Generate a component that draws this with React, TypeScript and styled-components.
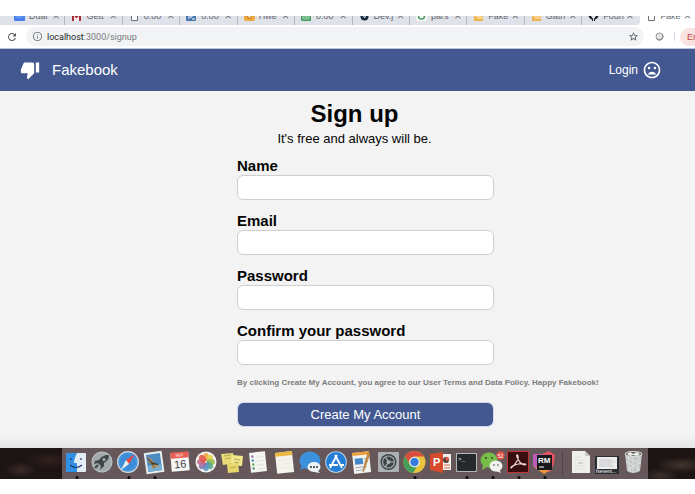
import React from "react";
import styled, { createGlobalStyle } from "styled-components";
import { MdThumbDown, MdMoodBad, MdRefresh, MdInfoOutline, MdStarBorder } from "react-icons/md";

const GlobalStyle = createGlobalStyle`
  * { box-sizing: border-box; }
  body { margin: 0; background: #fff; font-family: "Liberation Sans", Arial, sans-serif; overflow-x: hidden; }
  button, input { font-family: inherit; margin: 0; }
`;

const Screen = styled.div`
  padding: 16px 0 15px;
`;

/* Browser chrome */
const TabStrip = styled.nav`
  display: grid;
  grid-template-columns: repeat(12, minmax(0, 1fr));
  grid-template-rows: 9px;
  align-items: end;
  height: 9px;
  padding-left: 8px;
  margin-right: -2px;
  background: #dfe2e8;
  overflow: hidden;
`;

const TabSlot = styled.div<{ $beforeActive?: boolean }>`
  background: ${(p) => (p.$beforeActive ? "#fff" : "transparent")};
`;

const Tab = styled.button<{ $active?: boolean; $beforeActive?: boolean }>`
  width: 100%;
  height: 19px;
  display: flex;
  align-items: center;
  gap: 4px;
  padding: 0 4px 0 6px;
  border: 0;
  border-right: 1px solid ${(p) => (p.$active || p.$beforeActive ? "transparent" : "#b2b6bd")};
  border-radius: ${(p) => (p.$beforeActive ? "0 0 4px 0" : "0")};
  background: ${(p) => (p.$active ? "#fff" : "#dfe2e8")};
  color: #62666c;
  font-size: 9px;
  line-height: 12px;
`;

const TabTitle = styled.span`
  flex: 1;
  min-width: 0;
  white-space: nowrap;
  text-align: left;
`;

const TabClose = styled.span`
  font-size: 12px;
  padding-right: 1px;
`;

const AddressBar = styled.div`
  display: flex;
  align-items: center;
  height: 24px;
  padding-left: 6px;
  background: #fff;
  border-bottom: 1px solid #b9c3da;
  overflow: hidden;
  color: #5f6368;
`;

const ToolButton = styled.button`
  display: flex;
  padding: 0;
  border: 0;
  background: none;
  color: #54585d;
`;

const Address = styled.div`
  flex: 1;
  display: flex;
  align-items: center;
  gap: 4px;
  height: 19px;
  margin-left: 8px;
  padding: 0 5px 0 6px;
  border-radius: 10px;
  background: #f2f3f4;
  color: #777b80;
`;

const Url = styled.span`
  flex: 1;
  font: 9px/16px Roboto, sans-serif;
`;

const Host = styled.span`
  color: #25282b;
`;

const Extension = styled(ToolButton)`
  margin: 0 10px 0 11px;
`;

const ProfileArea = styled.div`
  padding-left: 5px;
  border-left: 1px solid #d2dae8;
  height: 9px;
  display: flex;
  align-items: center;
`;

const ErrorButton = styled.button`
  width: 15px;
  height: 18px;
  padding: 0 0 0 7px;
  border: 0;
  border-radius: 9px 0 0 9px;
  background: #f9e3e2;
  color: #c4473f;
  font-size: 9px;
  white-space: nowrap;
  overflow: hidden;
`;

/* Site */
const SiteHeader = styled.header`
  display: flex;
  align-items: center;
  justify-content: space-between;
  height: 42px;
  padding: 0 33px 0 20px;
  background: #435891;
  color: #fff;
`;

const Brand = styled.a`
  display: flex;
  align-items: center;
  gap: 12px;
  color: inherit;
  text-decoration: none;
  font-size: 15px;
  line-height: 18px;
`;

const LoginLink = styled(Brand)`
  gap: 4px;
  font-size: 12px;
`;

const Main = styled.main`
  padding: 8px 0 21px 237px;
  background: linear-gradient(to top, #e6e6e6, #f3f3f3 14px);
  color: #050505;
`;

const Intro = styled.div`
  width: 235px;
  text-align: center;
`;

const Title = styled.h1`
  margin: 0;
  font-size: 24px;
  line-height: 30px;
`;

const Subtitle = styled.p`
  margin: 0 0 8px;
  font-size: 13px;
  line-height: 20px;
  white-space: nowrap;
`;

const Form = styled.form`
  display: flex;
  flex-direction: column;
  align-items: flex-start;
`;

const Field = styled.div`
  display: flex;
  flex-direction: column;
  width: 257px;
  margin-bottom: 12px;
`;

const Label = styled.label`
  font-size: 15px;
  font-weight: bold;
  line-height: 18px;
`;

const TextInput = styled.input`
  height: 25px;
  padding: 0 8px;
  border: 1px solid #cecece;
  border-radius: 6px;
  background: #fff;
  font-size: 13px;
`;

const Terms = styled.p`
  margin: 0 0 14px;
  color: #7c7c7c;
  font-size: 8px;
  font-weight: bold;
  line-height: 11px;
  white-space: nowrap;
`;

const Submit = styled.button`
  width: 257px;
  height: 25px;
  padding: 0;
  border: 1px solid #d3d8e6;
  border-radius: 6px;
  background: #435891;
  background-clip: padding-box;
  color: #fff;
  font-size: 13px;
`;

/* Desktop */
const Desktop = styled.footer`
  display: flex;
  justify-content: center;
  height: 31px;
  padding-left: 15px;
  background:
    radial-gradient(ellipse 16px 8px at 3% 70%, #3b2b29, transparent),
    radial-gradient(ellipse 22px 9px at 7% 40%, #33201f, transparent),
    radial-gradient(ellipse 25px 8px at 98% 55%, #44362f, transparent),
    radial-gradient(ellipse 18px 8px at 95% 90%, #3c302c, transparent),
    #1c1514;
`;

const Dock = styled.div`
  display: flex;
  padding: 0 2px 0 1px;
  background: #66585a;
`;

const DockButton = styled.button`
  display: block;
  width: 26px;
  height: 31px;
  padding: 0;
  border: 0;
  background: none;
  svg { display: block; }
`;

const DockDivider = styled.div`
  width: 1px;
  height: 25px;
  margin: 3px 5px;
  background: #51474a;
`;

const tabs = [
  { title: "Dual", icon: "docs" }, { title: "Gett", icon: "mail" },
  { title: "0.00", icon: "page" }, { title: "0.00", icon: "blue" },
  { title: "Hwe", icon: "orange" }, { title: "0.00", icon: "sheet" },
  { title: "Dev.j", icon: "dark" }, { title: "pars", icon: "ring" },
  { title: "Fake", icon: "yellow" }, { title: "Gath", icon: "yellow" },
  { title: "Foun", icon: "github" }, { title: "Fake", icon: "page" },
];

const favicons: Record<string, React.ReactNode> = {
  docs: <><rect width="11" height="10" rx="1" fill="#477ee8" /><path d="M2 6h7" stroke="#7fa9f5" /></>,
  mail: <><rect x="1" width="9" height="10" fill="#f7eeee" /><path d="M2 10V2l3.500 4L9 2v8" fill="none" stroke="#a52c32" strokeWidth="2" /></>,
  page: <path d="M2.500 1h6v8.500h-6z" fill="#fff" stroke="#6d7177" />,
  blue: <><rect width="10" height="10" rx="1" fill="#4575ad" /><path d="M3 8V3h3v3H4M6 8h3" fill="none" stroke="#fff" /></>,
  orange: <><rect width="11" height="10" rx="2" fill="#eca83e" /><circle cx="5.500" cy="5.500" r="2" fill="#f7d084" stroke="#b77720" /></>,
  sheet: <><rect width="10" height="10" rx="1" fill="#4b9c63" /><path d="M2 6h6M5 3v5M2 3h6v5H2z" fill="none" stroke="#9bd1aa" /></>,
  dark: <><circle cx="5.500" cy="5.500" r="4" fill="#162c43" /><path d="m4 4 1.500 3L7 4" fill="none" stroke="#e4ebee" /></>,
  ring: <><rect width="11" height="10" rx="2" fill="#f4f7f4" /><circle cx="5.500" cy="5" r="3" fill="none" stroke="#4e9966" strokeWidth="1.500" /></>,
  yellow: <><path d="M1 1h9v9H1z" fill="#edb24a" /><path d="M4 7h6M2 5h7" stroke="#fff1c9" /></>,
  github: <path d="M4 10V8.500C-1 7 0 1 3 .500L5.500 1 8 .500c3 .500 4 6.500-1 8V10H6V7.500C8 7 8 4 7 3.500H4C3 4 3 7 5 7.500V10z" fill="#17191b" />,
};

const Favicon = ({ name }: { name: string }) => (
  <svg width="11" height="10" viewBox="0 0 11 10" aria-hidden="true">{favicons[name]}</svg>
);

type App = { name: string; art: React.ReactNode; running?: boolean };

const petals = ["#f2a23c", "#e4d34a", "#96bf50", "#55a987", "#5797c2", "#8979b2", "#c5688d", "#e55b4f"];

const apps: App[] = [
  { name: "Finder", running: true, art: <>
    <rect x="3" y="5" width="20" height="19" rx="1" fill="#e4edf6" />
    <path d="M4 5h10c-2 4-3 7-3 10h3v9H4a1 1 0 0 1-1-1V6a1 1 0 0 1 1-1z" fill="#318fe6" />
    <path d="M7 17q6 5 12 0M8 10v2M18 10v2" fill="none" stroke="#183b62" strokeWidth="1.200" /></> },
  { name: "Launchpad", art: <>
    <circle cx="13" cy="14" r="10.500" fill="#bfc4c5" /><circle cx="13" cy="14" r="9.500" fill="#a1a9ab" />
    <path d="M20 7c-5 0-8 2-10 5l-4 1-1 3 4-1 3 3-1 4 4-4v-3c3-2 5-4 5-8z" fill="#3e4447" />
    <circle cx="15" cy="11.500" r="1.500" fill="#aab2b4" /><path d="m6 20 3-3" stroke="#3e4447" strokeWidth="2" /></> },
  { name: "Safari", running: true, art: <>
    <circle cx="13" cy="14" r="11" fill="#d5dde2" /><circle cx="13" cy="14" r="9.800" fill="#3b8ddb" />
    <circle cx="13" cy="14" r="8.500" fill="none" stroke="#8dc3e8" strokeDasharray="1 1.500" strokeWidth=".6" />
    <path d="m20 6-9 6 3 4z" fill="#ec4940" /><path d="m6 22 5-10 3 4z" fill="#eef0ee" /></> },
  { name: "Mail", running: true, art: <g transform="rotate(-8 13 14)">
    <path d="M4 4h18v21H4z" fill="#e9eff1" /><path d="M6 6h14v17H6z" fill="#4c8ac2" />
    <path d="M6 17h14v6H6z" fill="#78aed2" /><path d="M6 8c4 1 5 3 6 5l6 7-4-1-3 2-1-5-3-3 2-1z" fill="#b8945a" />
    <path d="m7 9 4 5 6 3-6-1zM9 14l4 6" fill="#453e33" stroke="#453e33" strokeWidth=".6" /></g> },
  { name: "Calendar", art: <g transform="rotate(-5 13 14)">
    <path d="M4 5h18v18H4z" fill="#f6f6f4" /><path d="M4 4h18v6H4z" fill="#e95c52" />
    <text x="13" y="8.500" textAnchor="middle" fontSize="4" fill="#fff">SEP</text>
    <text x="13" y="20" textAnchor="middle" fontSize="11" fill="#424242">16</text></g> },
  { name: "Photos", art: <>
    <circle cx="13" cy="14" r="10.500" fill="#f3f3ef" />
    {petals.map((c, i) => <ellipse key={c} cx="13" cy="9.500" rx="3" ry="4.500" fill={c} opacity="0.900" transform={`rotate(${i * 45} 13 14)`} />)}
    <circle cx="13" cy="14" r="1" fill="#eee6cf" /></> },
  { name: "Stickies", art: <>
    <path d="m2 6 12-1 2 10-12 2z" fill="#eadd75" /><path d="m13 7 11 1-1 10-11-1z" fill="#f1e78b" />
    <path d="m8 16 11-1 1 9-11 1z" fill="#e7d86c" /><path d="m5 8 7-1M6 11l6-1M15 11l6 1M15 14l5 1M11 20l6-1" stroke="#9b914e" strokeWidth=".7" /></> },
  { name: "Reminders", art: <g transform="rotate(-6 13 14)">
    <path d="M5 4h16v20H5z" fill="#f4f4f2" />
    <circle cx="8" cy="8" r="1.200" fill="#8f6cae" /><circle cx="8" cy="12" r="1.200" fill="#438fbd" />
    <circle cx="8" cy="16" r="1.200" fill="#69a954" /><circle cx="8" cy="20" r="1.200" fill="#438f6d" />
    <path d="M11 9h8M11 13h8M11 17h8M11 21h8" stroke="#d8d8d8" strokeWidth=".7" /></g> },
  { name: "Notes", art: <g transform="rotate(-6 13 14)">
    <path d="M5 4h17v21H5z" fill="#f4f3ec" /><path d="M5 4h17v4H5z" fill="#eab83d" />
    <path d="M6 12h15M6 16h15M6 20h15" stroke="#e6e5e0" strokeWidth=".7" /></g> },
  { name: "Messages", art: <>
    <ellipse cx="13" cy="12.500" rx="10.500" ry="9" fill="#3b91dc" /><path d="m5 16-2 6 7-3" fill="#3b91dc" />
    <ellipse cx="17" cy="19" rx="6.500" ry="5" fill="#eff3f4" /><path d="m20 22 3 3-6-1" fill="#eff3f4" />
    <g fill="#303338"><circle cx="14" cy="19" r="1" /><circle cx="17" cy="19" r="1" /><circle cx="20" cy="19" r="1" /></g></> },
  { name: "App Store", art: <>
    <circle cx="13" cy="14" r="10.800" fill="#c3def4" /><circle cx="13" cy="14" r="10" fill="#257ed5" />
    <path d="m14 7-7 13M12 7l7 13M6 17h9M18 17h3" fill="none" stroke="#fff" strokeWidth="1.800" /></> },
  { name: "Pages", art: <g transform="rotate(-6 13 14)">
    <path d="M4 4h17v21H4z" fill="#f2f2ef" /><path d="M4 4h17v3H4z" fill="#eea139" />
    <path d="M6 10h8v6H6z" fill="#4287c8" /><path d="M6 19h11M6 22h8M15 11h4M15 14h4" stroke="#a5adb3" />
    <path d="m22 6-7 15-2 3 1-4 6-15z" fill="#d79239" stroke="#90652f" strokeWidth=".5" /></g> },
  { name: "System Preferences", art: <>
    <rect x="3" y="4" width="21" height="20" rx="1" fill="#abb0b3" /><circle cx="13.500" cy="14" r="8" fill="#3f4447" />
    <circle cx="13.500" cy="14" r="6" fill="none" stroke="#a3a8aa" strokeWidth="1.200" />
    <circle cx="13.500" cy="14" r="2" fill="#a3a8aa" />
    <path d="M13.500 14h6M13.500 14l-3-5M13.500 14l-3 5" stroke="#b4b9bb" strokeWidth="1.200" /></> },
  { name: "Chrome", running: true, art: <>
    <circle cx="13.500" cy="14" r="11" fill="#e9c33d" />
    <path d="M4 8.500A11 11 0 0 1 23 8.500H13.500A5.500 5.500 0 0 0 8.500 16z" fill="#d94c40" />
    <path d="m4 8.500 5 8a5 5 0 0 0 7 2L12 25A11 11 0 0 1 4 8.500z" fill="#439f58" />
    <circle cx="13.500" cy="14" r="5.300" fill="#f4f4f3" /><circle cx="13.500" cy="14" r="4.200" fill="#347ddd" /></> },
  { name: "PowerPoint", art: <>
    <path d="M15 6h9v16h-9z" fill="#f3f0eb" /><circle cx="19" cy="12" r="3" fill="#513c3b" />
    <path d="M19 12V9a3 3 0 0 1 3 3zM17 17h6M17 20h6" fill="#dc5637" stroke="#d86a52" />
    <path d="m3 6 13-2v21L3 22z" fill="#d64b2b" />
    <text x="6" y="18" fontSize="11" fontWeight="bold" fill="#fff">P</text></> },
  { name: "Terminal", running: true, art: <>
    <rect x="3" y="5" width="21" height="19" rx="1" fill="#b2b6b6" /><rect x="4" y="6" width="19" height="17" rx="1" fill="#25292c" />
    <text x="5" y="13" fontSize="6" fontFamily="Liberation Mono, monospace" fill="#fff">&gt;_</text></> },
  { name: "WeChat", running: true, art: <>
    <ellipse cx="10" cy="12" rx="8.500" ry="7.500" fill="#78bd48" /><path d="m4 17-1 5 5-3" fill="#78bd48" />
    <ellipse cx="17" cy="18" rx="6.500" ry="5.500" fill="#f0f2ee" /><path d="m20 21 2 4-5-2" fill="#f0f2ee" />
    <g fill="#394434"><circle cx="7" cy="10" r="1" /><circle cx="13" cy="10" r="1" /><circle cx="15" cy="17" r=".8" /><circle cx="19" cy="17" r=".8" /></g>
    <circle cx="21.500" cy="7.500" r="4.200" fill="#e35149" /><text x="21.500" y="9.500" fontSize="5" textAnchor="middle" fill="#fff">52</text></> },
  { name: "Acrobat", running: true, art: <>
    <rect x="2" y="3" width="22" height="22" fill="#bd3632" /><rect x="3" y="4" width="20" height="20" fill="#380e10" />
    <path d="M6 20c4-3 8-9 7-12-.500-2-2-1-1 1 2 5 5 8 8 8 3-1-3-2-7-1-3 .500-8 3-7 4z" fill="none" stroke="#f2dada" strokeWidth="1.200" /></> },
  { name: "RubyMine", running: true, art: <>
    <path d="m2 6 9 0 7-3 6 4-1 8-3 8-8 2-9-6z" fill="#e15365" /><path d="m2 6 10 0-6 16-4-4z" fill="#bb5db5" />
    <path d="m3 19 16 3-6 4z" fill="#ed943d" /><rect x="6" y="7" width="15" height="15" fill="#17191b" />
    <text x="7" y="15" fontSize="8" fontWeight="bold" fill="#fff">RM</text><path d="M8 19h5" stroke="#fff" /></> },
];

const shelf: App[] = [
  { name: "Document", art: <><path d="M4 3h13l5 5v17H4z" fill="#eeeeec" /><path d="m17 3 5 5h-5z" fill="#c8c8c7" />
    <path d="M7 9h7M7 12h11M7 18h11M7 21h11" stroke="#dadad9" strokeWidth=".7" /><path d="M10 15h5" stroke="#999" strokeWidth=".7" /></> },
  { name: "fsevents", art: <><rect x="1" y="8" width="24" height="18" fill="#292d32" /><path d="M3 9h20v12H3z" fill="#ededed" />
    <path d="M5 12h13M5 14h16M5 16h12M5 18h15" stroke="#b5b8bb" strokeWidth=".7" />
    <text x="12" y="25" textAnchor="middle" fontSize="5" fill="#fff">fsevent...</text></> },
  { name: "Trash", art: <><path d="m5 6 2 17q6 4 13 0l2-17z" fill="#c5c8c8" /><path d="m8 8 2 16M13 9v16M19 8l-2 16M6 13l14 9M21 13 8 22M6 9l15 7" stroke="#dfe0df" strokeWidth=".8" />
    <ellipse cx="13.500" cy="6" rx="8.500" ry="2.500" fill="#626565" stroke="#e4e4e2" /><path d="m7 6 3-2 3 2 4-2 3 2-3 2-4-1-3 1z" fill="#eeeeeb" /></> },
];

const DockItem = ({ app }: { app: App }) => (
  <DockButton type="button" aria-label={app.name}>
    <svg width="26" height="31" viewBox="0 0 26 31" aria-hidden="true">
      {app.art}
      {app.running && <circle cx="14" cy="29.500" r="1.500" fill="#0c0a0b" />}
    </svg>
  </DockButton>
);

const fields = [
  { id: "name", label: "Name", type: "text" },
  { id: "email", label: "Email", type: "email" },
  { id: "password", label: "Password", type: "password" },
  { id: "confirm", label: "Confirm your password", type: "password" },
];

export default function App() {
  return (
    <Screen>
      <GlobalStyle />
      <TabStrip aria-label="Browser tabs">
        {tabs.map((tab, i) => {
          const active = i === tabs.length - 1;
          const beforeActive = i === tabs.length - 2;
          return (
            <TabSlot key={i} $beforeActive={beforeActive}>
              <Tab type="button" $active={active} $beforeActive={beforeActive}>
                <Favicon name={tab.icon} />
                <TabTitle>{tab.title}</TabTitle>
                <TabClose aria-hidden="true">×</TabClose>
              </Tab>
            </TabSlot>
          );
        })}
      </TabStrip>
      <AddressBar>
        <ToolButton type="button" aria-label="Reload"><MdRefresh size={12} /></ToolButton>
        <Address>
          <MdInfoOutline size={11} />
          <Url><Host>localhost</Host>:3000/signup</Url>
          <ToolButton type="button" aria-label="Bookmark"><MdStarBorder size={11} /></ToolButton>
        </Address>
        <Extension type="button" aria-label="Extension">
          <svg width="9" height="9" viewBox="0 0 9 9" aria-hidden="true">
            <circle cx="4.500" cy="4.500" r="3.500" fill="#e6e6e6" stroke="#929497" />
            <path d="M7.500 3A3.500 3.500 0 0 1 2 7" fill="none" stroke="#8b8d8f" strokeWidth="1.200" />
          </svg>
        </Extension>
        <ProfileArea><ErrorButton type="button">Error</ErrorButton></ProfileArea>
      </AddressBar>
      <SiteHeader>
        <Brand href="#home"><MdThumbDown size={20} />Fakebook</Brand>
        <LoginLink href="#login">Login<MdMoodBad size={20} /></LoginLink>
      </SiteHeader>
      <Main>
        <Intro>
          <Title>Sign up</Title>
          <Subtitle>It's free and always will be.</Subtitle>
        </Intro>
        <Form onSubmit={(e) => e.preventDefault()}>
          {fields.map((f) => (
            <Field key={f.id}>
              <Label htmlFor={f.id}>{f.label}</Label>
              <TextInput id={f.id} name={f.id} type={f.type} />
            </Field>
          ))}
          <Terms>By clicking Create My Account, you agree to our User Terms and Data Policy. Happy Fakebook!</Terms>
          <Submit type="submit">Create My Account</Submit>
        </Form>
      </Main>
      <Desktop>
        <Dock>
          {apps.map((app) => <DockItem key={app.name} app={app} />)}
          <DockDivider />
          {shelf.map((app) => <DockItem key={app.name} app={app} />)}
        </Dock>
      </Desktop>
    </Screen>
  );
}
